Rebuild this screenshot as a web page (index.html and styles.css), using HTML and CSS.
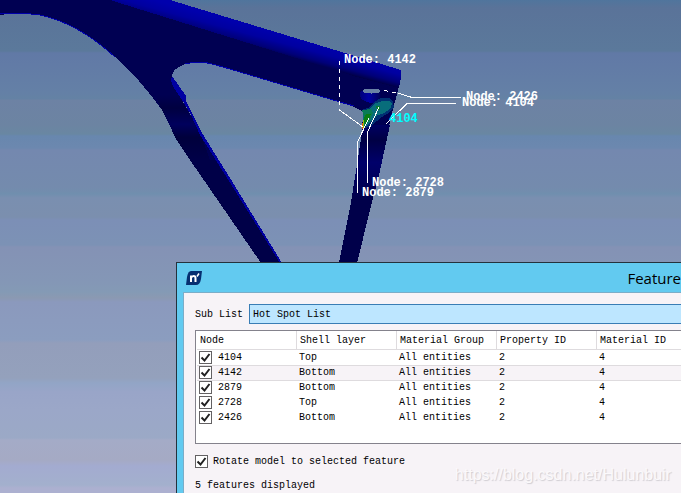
FILE: index.html
```html
<!DOCTYPE html>
<html lang="en">
<head>
<meta charset="utf-8">
<title>Feature</title>
<link rel="stylesheet" href="styles.css">
</head>
<body>
<main class="viewport">
<svg class="model" viewBox="0 0 681 493" preserveAspectRatio="xMinYMin slice" role="img" aria-label="Stress model with node markers">
  <defs>
    <linearGradient id="tube" gradientUnits="userSpaceOnUse" x1="280" y1="34" x2="273" y2="60">
      <stop offset="0" stop-color="#0000ad"/>
      <stop offset=".3" stop-color="#0000a0"/>
      <stop offset=".6" stop-color="#000078"/>
      <stop offset=".82" stop-color="#000040"/>
      <stop offset="1" stop-color="#000052"/>
    </linearGradient>
    <linearGradient id="strut" gradientUnits="userSpaceOnUse" x1="0" y1="95" x2="0" y2="160">
      <stop offset="0" stop-color="#000052"/>
      <stop offset=".2" stop-color="#000040"/>
      <stop offset=".45" stop-color="#00005c"/>
      <stop offset=".65" stop-color="#00003c"/>
      <stop offset="1" stop-color="#000048"/>
    </linearGradient>
    <linearGradient id="post" gradientUnits="userSpaceOnUse" x1="0" y1="125" x2="0" y2="200">
      <stop offset="0" stop-color="#000062"/>
      <stop offset=".2" stop-color="#000044"/>
      <stop offset=".5" stop-color="#00006a"/>
      <stop offset="1" stop-color="#00004a"/>
    </linearGradient>
    <linearGradient id="bore" x1="0" y1="0" x2="1" y2="0">
      <stop offset="0" stop-color="#000078"/>
      <stop offset=".4" stop-color="#0000a4"/>
      <stop offset="1" stop-color="#00004c"/>
    </linearGradient>
  </defs>
  <g shape-rendering="crispEdges">
    <path fill="#000052" d="M0 0H170L401 70V78L398 90L392 113L386 140L379 175L370 210L357 263H339L350 208L357 165L362 132L363 113Q360 108 340 102L230 69L216 65Q200 60 185 64Q172 69 172 76V84L188 110L201 134L230 180L282 263H261L230 217L176 139L168 122L162 110Q140 79 115 57Q78 23 40 15Q20 12 0 15Z"/>
    <path fill="url(#strut)" d="M155 95H179L188 112L201 135L210 160H190L176 139L168 122L162 110Z"/>
    <path fill="#000048" d="M190 160H215L282 263H261Z"/>
    <path fill="url(#post)" d="M363 125H390L379 175L370 210L357 263H339L350 208L357 165Z"/>
    <path fill="url(#tube)" d="M110 0H170L401 70V78L399 88L357 77Z"/>
    <path fill="#0000a2" d="M172 76L186 96V101L193 115L202 133L230 178L282 263H280L229 181L200 135L191 115L184 103L174 88L171 81Z"/>
    <path fill="none" stroke="#0000aa" d="M0 14Q20 12 40 15Q78 23 115 57M185 64Q200 60 216 65L230 69L340 102L354 106"/>
    <path fill="url(#bore)" d="M360 93Q362 89 371 89Q380 89 382 92V98Q379 103 371 103Q361 101 360 96Z"/>
    <ellipse cx="371.500" cy="91" rx="9" ry="2.500" fill="#6981a5"/>
    <path fill="#003073" d="M362 110L370 107L374 102L381 98H389L393 102L394 107L390 112L382 117L371 126L363 129L364 116Z"/>
    <path fill="#086d7b" d="M363 111L371 108L374 104L382 101H390L392 104L390 109L384 113L376 116L369 124L363 128Z"/>
    <path fill="#087b55" d="M362 110L371 109L373 113L370 120L364 128H362L364 116Z"/>
    <path fill="#087e13" d="M366 114H371L369 120L365 124L363 121Z"/>
    <path stroke="#92b910" d="M363.500 120V128"/>
    <path stroke="#e65a08" d="M362.500 123V129"/>
    <path fill="#087e30" d="M376 106H380V110H377Z"/>
  </g>
  <g class="leader" shape-rendering="crispEdges">
    <path stroke-dasharray="4 4" d="M339.500 61V109"/>
    <path d="M339.500 109V110L363 127"/>
    <path stroke-dasharray="4 4" d="M384 90.500L398 93"/>
    <path d="M398 93L412 97.500H461"/>
    <path d="M386 124L407 103.500H456"/>
    <path d="M379 107L367.500 132V183"/>
    <path d="M369 118L357.500 142V193"/>
  </g>
  <g class="marks">
    <text x="344" y="63">Node: 4142</text>
    <text x="466" y="100">Node: 2426</text>
    <text x="462" y="106">Node: 4104</text>
    <text class="picked" x="389" y="122">4104</text>
    <text x="372" y="186">Node: 2728</text>
    <text x="362" y="196">Node: 2879</text>
  </g>
</svg>

<section class="dialog" aria-labelledby="title">
  <header class="titlebar">
    <svg class="logo" viewBox="0 0 16 14" aria-hidden="true">
      <path fill="#062f70" d="M5 0H16L15 8Q14 14 10 14H0L1 6Q2 0 5 0Z"/>
      <path fill="none" stroke="#fff" stroke-width="2" d="M5 11V4.500M5 7Q6 5 7.500 5Q9.500 5 9.500 7V11"/>
      <path fill="none" stroke="#fff" stroke-width="1.500" d="M11 5.500L13 2.500"/>
    </svg>
    <h1 class="title" id="title">Feature</h1>
  </header>
  <div class="panel">
    <div class="field">
      <label for="sub">Sub List</label>
      <select id="sub" class="combo"><option>Hot Spot List</option></select>
    </div>
    <div class="list">
      <table>
        <thead><tr><th>Node</th><th>Shell layer</th><th>Material Group</th><th>Property ID</th><th>Material ID</th></tr></thead>
        <tbody>
          <tr><td><label class="check"><input type="checkbox" checked>4104</label></td><td>Top</td><td>All entities</td><td>2</td><td>4</td></tr>
          <tr class="current"><td><label class="check"><input type="checkbox" checked>4142</label></td><td>Bottom</td><td>All entities</td><td>2</td><td>4</td></tr>
          <tr><td><label class="check"><input type="checkbox" checked>2879</label></td><td>Bottom</td><td>All entities</td><td>2</td><td>4</td></tr>
          <tr><td><label class="check"><input type="checkbox" checked>2728</label></td><td>Top</td><td>All entities</td><td>2</td><td>4</td></tr>
          <tr><td><label class="check"><input type="checkbox" checked>2426</label></td><td>Bottom</td><td>All entities</td><td>2</td><td>4</td></tr>
        </tbody>
      </table>
    </div>
    <label class="check rotate"><input type="checkbox" checked>Rotate model to selected feature</label>
    <p class="status">5 features displayed</p>
  </div>
</section>
<p class="watermark">https://blog.csdn.net/Hulunbuir</p>
</main>
</body>
</html>
```

FILE: styles.css
```css
* { box-sizing: border-box; }

body {
  margin: 0;
  font: 10px/15px "Liberation Mono", monospace;
  color: #000;
}

.viewport {
  position: relative;
  height: 100vh;
  overflow: hidden;
  background: linear-gradient(#50759d 0, #5a7399 8px, #5b799b 51px, #6179a6 53px, #6480a6 92px, #6482a4 99px, #6d82a4 100px, #6c84a2 125px, #6987a2 134px, #6887ae 136px, #6c88af 148px, #7488af 150px, #748bad 188px, #708fae 194px, #7a8fb0 198px, #7b8fae 217px, #7c8fb6 220px, #7c92b5 245px, #8492b5 247px, #8497b6 282px, #849ab5 292px, #8b99b2 298px, #8b99bd 302px, #8b9dbf 340px, #939ebb 343px, #94a1bc 378px, #92a5c6 383px, #99a5c8 392px, #9ba7c8 410px, #9ba9c6 438px, #a4abc7 440px, #a5aac4 460px, #a3abd0 466px, #a3b0cd 485px, #acb0d0 488px);
}

.model {
  position: absolute;
  inset: 0;
  width: 100%;
  height: 100%;
}

.leader { fill: none; stroke: #fff; }

.marks {
  fill: #fff;
  font: bold 12px "Liberation Mono", monospace;
}

.picked { fill: #00ffff; }

.dialog {
  position: absolute;
  left: 176px;
  right: 0;
  top: 262px;
  bottom: 0;
  display: flex;
  flex-direction: column;
  padding-left: 6px;
  background: #62caf0;
  border: solid #24323c;
  border-width: 1px 0 0 1px;
}

.titlebar {
  flex: none;
  display: flex;
  align-items: center;
  justify-content: space-between;
  height: 29px;
  padding-left: 3px;
}

.logo { width: 16px; height: 14px; }

.title {
  margin: 0;
  font: 15px/28px "Open Sans", sans-serif;
}

.panel {
  flex: 1;
  padding: 11px 0 0 11px;
  background: #f7f3f7;
  border: solid #7badc8;
  border-width: 1px 0 0 1px;
}

.field {
  display: flex;
  align-items: center;
  gap: 6px;
}

.combo {
  flex: 1;
  height: 20px;
  padding: 0 3px;
  appearance: none;
  font: inherit;
  color: inherit;
  background: #bde6ff;
  border: solid #397db5;
  border-width: 1px 0 1px 1px;
  border-radius: 0;
}

.list {
  height: 114px;
  margin-top: 6px;
  padding-left: 1px;
  background: #fff;
  border: solid #84828c;
  border-width: 1px 0 1px 1px;
}

table {
  width: 100%;
  border-collapse: separate;
  border-spacing: 0;
  table-layout: fixed;
}

th, td {
  height: 15px;
  padding: 0 2px;
  text-align: left;
  font-weight: normal;
  white-space: nowrap;
}

th {
  width: 100px;
  height: 19px;
  padding: 0 3px;
  border-right: 1px solid #dedbde;
  border-bottom: 1px solid #dedbde;
}

th:last-child {
  width: auto;
  border-right: 0;
}

.current td {
  background: #f7f3f7;
  box-shadow: 0 1px #dedbde, inset 0 1px #dedbde;
}

.check {
  display: flex;
  align-items: center;
  gap: 6px;
}

.check input {
  flex: none;
  width: 13px;
  height: 13px;
  margin: 0;
  appearance: none;
  border: 1px solid #636163;
  background: #fff url("data:image/svg+xml,%3Csvg xmlns='http://www.w3.org/2000/svg' viewBox='0 0 11 11'%3E%3Cpath d='M1.500 5.500L4.500 8.500L9.500 2' fill='none' stroke='%23212021' stroke-width='2'/%3E%3C/svg%3E");
}

.rotate { margin-top: 10px; gap: 5px; }

.status { margin: 9px 0 0; }

.watermark {
  position: absolute;
  right: 10px;
  bottom: 8px;
  margin: 0;
  font: 16px/20px "Liberation Sans", sans-serif;
  color: #fbf9fb;
  text-shadow: 1px 1px 1px #cfccd1;
}
```
